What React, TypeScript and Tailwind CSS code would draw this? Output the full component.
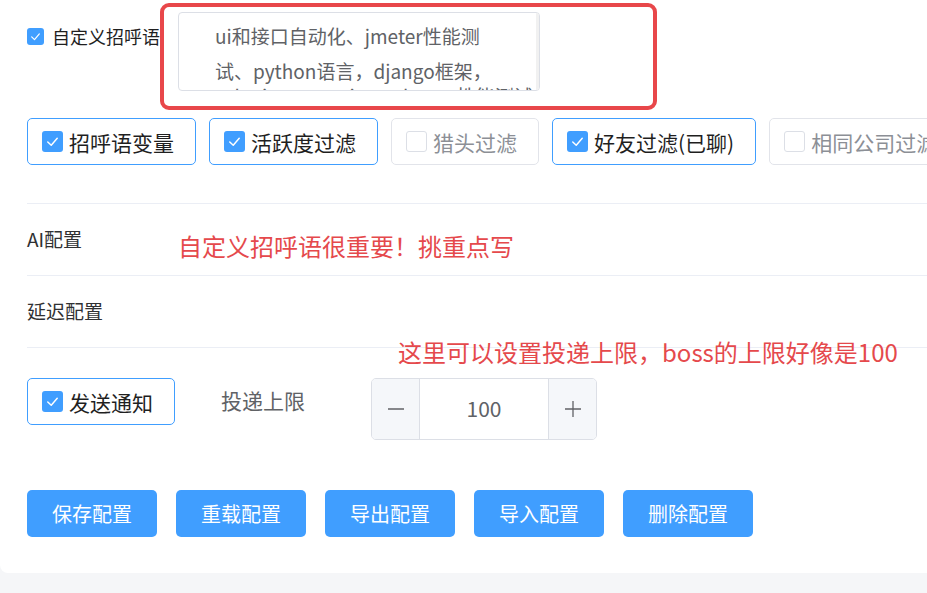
import React from "react";

const FONT = { fontFamily: '"Microsoft YaHei", "Noto Sans CJK SC", "Liberation Sans", sans-serif' };

function Tick({ size }: { size: number }) {
  return (
    <svg width={size} height={size} viewBox="0 0 20 20" fill="none">
      <polyline points="5.5,10.5 8.8,13.6 14.5,7" stroke="white" strokeWidth="1.4" strokeLinecap="round" strokeLinejoin="round" />
    </svg>
  );
}

function Box({ checked }: { checked: boolean }) {
  return checked ? (
    <span className="flex h-[21px] w-[21px] items-center justify-center rounded-[3px] bg-[#409eff]">
      <Tick size={21} />
    </span>
  ) : (
    <span className="h-[21px] w-[21px] rounded-[3px] border border-[#dcdfe6] bg-white" />
  );
}

function BorderedCheck({ label, checked }: { label: string; checked: boolean }) {
  return (
    <div
      className={`flex h-[47px] shrink-0 items-center gap-[6px] rounded-[5px] border pl-[14px] pr-[21px] text-[21px] ${
        checked ? "border-[#409eff] text-[#1f1f1f]" : "border-[#e2e4ea] text-[#8c8f96]"
      }`}
    >
      <Box checked={checked} />
      <span className="leading-[24px]">{label}</span>
    </div>
  );
}

const filters = [
  { label: "招呼语变量", checked: true },
  { label: "活跃度过滤", checked: true },
  { label: "猎头过滤", checked: false },
  { label: "好友过滤(已聊)", checked: true },
  { label: "相同公司过滤", checked: false },
];

const actions = ["保存配置", "重载配置", "导出配置", "导入配置", "删除配置"];

export default function App() {
  return (
    <div className="h-[593px] w-[927px] overflow-hidden bg-[#f5f6f8]" style={FONT}>
      <div className="relative h-[573px] rounded-bl-[8px] bg-white pl-[27px] pt-[12px]">
        {/* greeting */}
        <div className="flex items-start">
          <div className="mt-[15px] flex items-center gap-[8px]">
            <span className="flex h-[17px] w-[17px] items-center justify-center rounded-[3px] bg-[#409eff]">
              <Tick size={17} />
            </span>
            <span className="text-[18px] leading-none text-[#1f1f1f]">自定义招呼语</span>
          </div>
          <div className="relative ml-[18px] h-[79px] w-[362px] overflow-hidden rounded-[4px] border border-[#dcdfe6] pl-[36px] pt-[5px] text-[19px] leading-[35px] text-[#606266]">
            <div className="whitespace-nowrap">ui和接口自动化、jmeter性能测</div>
            <div className="whitespace-nowrap">试、python语言，django框架，</div>
            <div className="-mt-[10px] whitespace-nowrap">selenium，appium，locust性能测试，持续</div>
            <span className="absolute right-0 top-0 h-full w-[3px] bg-[#f1f1f1]" />
          </div>
        </div>

        {/* annotation box */}
        <div className="absolute left-[160px] top-[3px] h-[107px] w-[497px] rounded-[9px] border-[4px] border-[#e8474a]" />

        {/* filter options */}
        <div className="mt-[27px] flex gap-[13px] overflow-hidden">
          {filters.map((f) => (
            <BorderedCheck key={f.label} label={f.label} checked={f.checked} />
          ))}
        </div>

        <div className="mt-[38px] border-t border-[#ebeef5]">
          <div className="flex h-[71px] items-center text-[19px] text-[#303133]">AI配置</div>
        </div>
        <div className="border-t border-[#ebeef5]">
          <div className="flex h-[71px] items-center text-[19px] text-[#303133]">延迟配置</div>
        </div>
        <div className="border-t border-[#ebeef5]" />

        <div className="absolute left-[178px] top-[234px] text-[24px] leading-none text-[#e5494c]">
          自定义招呼语很重要！挑重点写
        </div>
        <div className="absolute left-[398px] top-[340px] text-[24px] leading-none text-[#e5494c]">
          这里可以设置投递上限，boss的上限好像是100
        </div>

        {/* send row */}
        <div className="mt-[30px] flex items-start">
          <BorderedCheck label="发送通知" checked={true} />
          <div className="ml-[46px] mt-[12px] text-[21px] leading-none text-[#606266]">投递上限</div>
          <div className="ml-[66px] flex h-[62px] w-[226px] overflow-hidden rounded-[5px] border border-[#dcdfe6]">
            <div className="flex w-[48px] items-center justify-center border-r border-[#dcdfe6] bg-[#f5f7fa]">
              <svg width="18" height="18" viewBox="0 0 18 18">
                <line x1="1" y1="9" x2="17" y2="9" stroke="#606266" strokeWidth="1.3" />
              </svg>
            </div>
            <div className="flex flex-1 items-center justify-center text-[21px] text-[#606266]">100</div>
            <div className="flex w-[48px] items-center justify-center border-l border-[#dcdfe6] bg-[#f5f7fa]">
              <svg width="18" height="18" viewBox="0 0 18 18">
                <line x1="1" y1="9" x2="17" y2="9" stroke="#606266" strokeWidth="1.3" />
                <line x1="9" y1="1" x2="9" y2="17" stroke="#606266" strokeWidth="1.3" />
              </svg>
            </div>
          </div>
        </div>

        {/* actions */}
        <div className="mt-[50px] flex gap-[19px]">
          {actions.map((a) => (
            <button
              key={a}
              className="flex h-[47px] w-[130px] items-center justify-center rounded-[5px] bg-[#409eff] text-[20px] text-white"
            >
              {a}
            </button>
          ))}
        </div>
      </div>
    </div>
  );
}
